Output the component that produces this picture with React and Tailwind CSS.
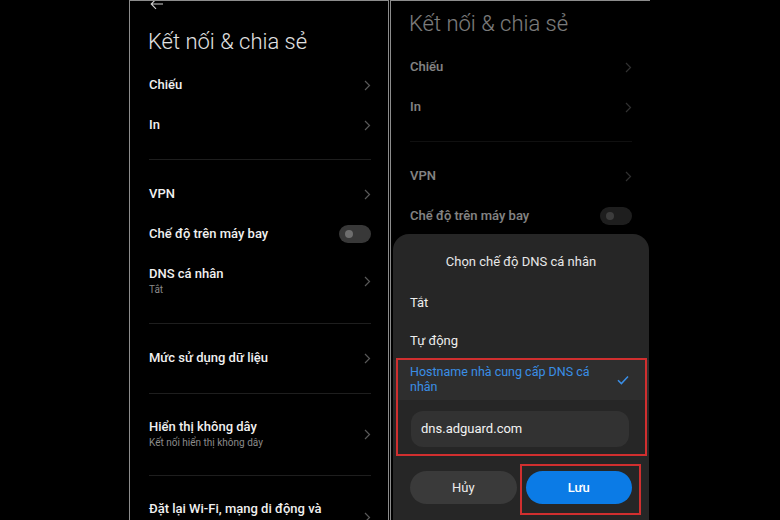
import React from 'react';

const Chevron = () => (
    <svg width="7" height="11" viewBox="0 0 7 11" className="shrink-0">
        <path d="M1 1l4.5 4.5L1 10" stroke="#595959" strokeWidth="1.2" fill="none" />
    </svg>
);

const Toggle = () => (
    <div className="w-[32px] h-[18px] rounded-full bg-[#383838] flex items-center pl-[6px] shrink-0">
        <div className="w-[8px] h-[8px] rounded-full bg-[#6e6e6e]" />
    </div>
);

const Divider = ({ h = 'h-[29px]' }) => (
    <div className={`${h} flex items-center`}>
        <div className="h-px w-full bg-[#1e1e1e]" />
    </div>
);

const Row = ({ title, sub, right, h = 'h-[40px]' }) => (
    <div className={`${h} flex items-center justify-between`}>
        <div className="flex flex-col">
            <span className="text-[13px] leading-[16px] font-medium text-[#f0f0f0]">{title}</span>
            {sub && <span className="text-[10px] leading-[15px] text-[#8a8a8a]">{sub}</span>}
        </div>
        {right || <Chevron />}
    </div>
);

// short: only the rows that stay visible above the dialog
const SettingsList = ({ short = false }) => (
    <div className="flex flex-col">
        <div className="h-[14px] pl-[1px]">
            <svg width="14" height="12" viewBox="0 0 14 12" className="-mt-[3px] block">
                <path d="M13 6H1.5M6 1.2L1.2 6 6 10.8" stroke="#cfcfcf" strokeWidth="1.1" fill="none" />
            </svg>
        </div>
        <h1 className="mt-[13px] mb-[9px] text-[22px] leading-[28px] font-light text-[#e2e2e2] -ml-[1px]">Kết nối &amp; chia sẻ</h1>
        <Row title="Chiếu" />
        <Row title="In" />
        <Divider />
        <Row title="VPN" />
        <Row title="Chế độ trên máy bay" right={<Toggle />} />
        {!short && (
            <>
                <Row title="DNS cá nhân" sub="Tắt" h="h-[54px]" />
                <Divider h="h-[30px]" />
                <Row title="Mức sử dụng dữ liệu" />
                <Divider h="h-[30px]" />
                <Row title="Hiển thị không dây" sub="Kết nối hiển thị không dây" h="h-[53px]" />
                <Divider h="h-[28px]" />
                <div className="h-[56px] flex items-center justify-between">
                    <div className="h-[32px] flex flex-col">
                        <span className="text-[13px] leading-[16px] font-medium text-[#f0f0f0]">Đặt lại Wi-Fi, mạng di động và</span>
                    </div>
                    <Chevron />
                </div>
            </>
        )}
    </div>
);

const DnsDialog = () => (
    <div className="absolute left-[2px] right-[1px] top-[233px] bottom-0 rounded-t-[16px] bg-[#262626]">
        <div className="h-[50px] pt-[19px] text-center text-[13px] leading-[18px] text-[#e8e8e8]">Chọn chế độ DNS cá nhân</div>
        <div className="h-[38px] px-[17px] flex items-center text-[13px] text-[#ededed]">Tắt</div>
        <div className="h-[38px] px-[17px] flex items-center text-[13px] text-[#ededed]">Tự động</div>
        <div className="h-[40px] pl-[17px] pr-[20px] bg-[#2e2e2e] flex items-center justify-between">
            <span className="text-[12.5px] leading-[15px] text-[#3a8ee6] -mt-[3px]">Hostname nhà cung cấp DNS cá<br />nhân</span>
            <svg width="12" height="10" viewBox="0 0 12 10">
                <path d="M1 5.2l3.4 3.4L11 1.5" stroke="#3a8ee6" strokeWidth="1.5" fill="none" />
            </svg>
        </div>
        <div className="pt-[11px] pl-[18px] pr-[20px]">
            <div className="h-[36px] rounded-[12px] bg-[#323232] px-[10px] flex items-center text-[13px] text-[#f2f2f2]">dns.adguard.com</div>
        </div>
        <div className="mt-[24px] px-[17px] flex gap-[9px]">
            <button className="flex-1 h-[33px] rounded-full bg-[#3a3a3a] text-[13px] text-[#ececec]">Hủy</button>
            <button className="flex-1 h-[33px] rounded-full bg-[#0b7be6] text-[13px] font-medium text-white">Lưu</button>
        </div>
        <div className="absolute left-[3px] top-[124px] w-[251px] h-[98px] border-2 border-[#d12f2f]" />
        <div className="absolute left-[127px] top-[230px] w-[121px] h-[51px] border-2 border-[#d12f2f]" />
    </div>
);

export default function App() {
    return (
        <div className="w-[780px] h-[520px] bg-black flex font-[Roboto,'Noto_Sans',sans-serif] overflow-hidden">
            <div className="w-[129px] shrink-0" />
            <div className="w-[260px] shrink-0 border-l border-t border-r border-[#8c8c8c] bg-black overflow-hidden pl-[19px] pr-[17px]">
                <SettingsList />
            </div>
            <div className="w-px shrink-0" />
            <div className="relative w-[260px] shrink-0 border-l border-t border-[#8c8c8c] bg-black overflow-hidden">
                <div className="pl-[19px] pr-[18px] -mt-[18px]">
                    <SettingsList short />
                </div>
                <div className="absolute inset-0 bg-black/45" />
                <DnsDialog />
            </div>
        </div>
    );
}
